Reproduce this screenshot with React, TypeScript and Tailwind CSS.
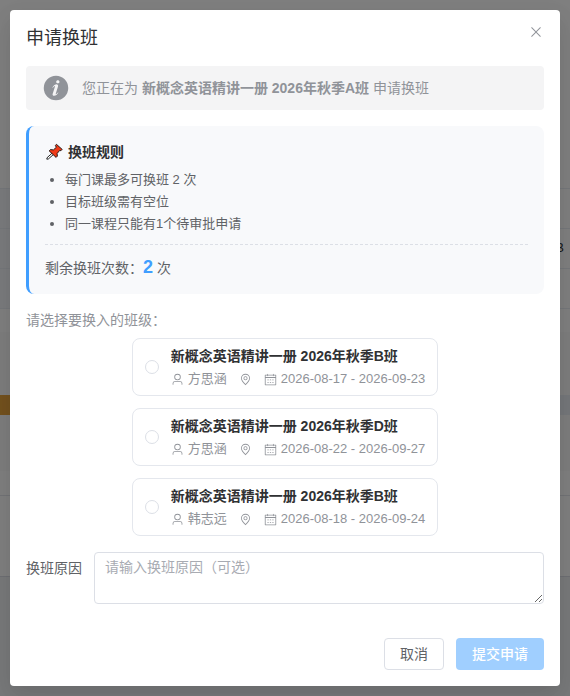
import { useState } from "react";

type IconProps = { paths: string[]; className: string };

function Icon({ paths, className }: IconProps) {
  return (
    <svg viewBox="0 0 1024 1024" fill="currentColor" aria-hidden="true" className={className}>
      {paths.map((d) => (
        <path key={d} d={d} />
      ))}
    </svg>
  );
}

const closeIcon = [
  "M764.288 214.592 512 466.88 259.712 214.592a31.936 31.936 0 0 0-45.12 45.12L466.752 512 214.528 764.224a31.936 31.936 0 1 0 45.12 45.184L512 557.184l252.288 252.288a31.936 31.936 0 0 0 45.12-45.12L557.12 512.064l252.288-252.352a31.936 31.936 0 1 0-45.12-45.184z",
];
const infoIcon = [
  "M512 64a448 448 0 1 1 0 896.064A448 448 0 0 1 512 64m67.2 275.072c33.28 0 60.288-23.104 60.288-57.344s-27.072-57.344-60.288-57.344c-33.28 0-60.16 23.104-60.16 57.344s26.88 57.344 60.16 57.344M590.912 699.2c0-6.848 2.368-24.64 1.024-34.752l-52.608 60.544c-10.88 11.456-24.512 19.392-30.912 17.28a12.992 12.992 0 0 1-8.256-14.72l87.68-276.992c7.168-35.136-12.544-67.2-54.336-71.296-44.096 0-108.992 44.736-148.48 101.504 0 6.784-1.28 23.68.064 33.792l52.544-60.608c10.88-11.328 23.552-19.328 29.952-17.152a12.8 12.8 0 0 1 7.808 16.128L388.48 728.576c-10.048 32.256 8.96 63.872 55.04 71.04 67.84 0 107.904-43.648 147.456-100.416z",
];
const userIcon = [
  "M512 512a192 192 0 1 0 0-384 192 192 0 0 0 0 384m0 64a256 256 0 1 1 0-512 256 256 0 0 1 0 512m320 320v-96a96 96 0 0 0-96-96H288a96 96 0 0 0-96 96v96a32 32 0 1 1-64 0v-96a160 160 0 0 1 160-160h448a160 160 0 0 1 160 160v96a32 32 0 1 1-64 0",
];
const locationIcon = [
  "M800 416a288 288 0 1 0-576 0c0 118.144 94.528 272.128 288 456.576C705.472 688.128 800 534.144 800 416M512 960C277.312 746.688 160 565.312 160 416a352 352 0 0 1 704 0c0 149.312-117.312 330.688-352 544",
  "M512 512a96 96 0 1 0 0-192 96 96 0 0 0 0 192m0 64a160 160 0 1 1 0-320 160 160 0 0 1 0 320",
];
const calendarIcon = [
  "M128 384v512h768V192H768v32a32 32 0 1 1-64 0v-32H320v32a32 32 0 0 1-64 0v-32H128v128h768v64zm192-256h384V96a32 32 0 1 1 64 0v32h160a32 32 0 0 1 32 32v768a32 32 0 0 1-32 32H96a32 32 0 0 1-32-32V160a32 32 0 0 1 32-32h160V96a32 32 0 0 1 64 0zm-32 384h64a32 32 0 0 1 0 64h-64a32 32 0 0 1 0-64m0 192h64a32 32 0 1 1 0 64h-64a32 32 0 1 1 0-64m192-192h64a32 32 0 0 1 0 64h-64a32 32 0 0 1 0-64m0 192h64a32 32 0 1 1 0 64h-64a32 32 0 1 1 0-64m192-192h64a32 32 0 1 1 0 64h-64a32 32 0 1 1 0-64m0 192h64a32 32 0 1 1 0 64h-64a32 32 0 1 1 0-64",
];

function PinIcon() {
  return (
    <svg viewBox="-1 0 18 18" aria-hidden="true" className="size-[18px] shrink-0">
      <path d="M6.2 10 1 14.8.8 16.2l1.5-.2 5.3-4.6z" fill="#fff" stroke="#111" strokeWidth=".9" />
      <path
        d="M10.4 1.3 16.2 6.4l-1.3 1.3-1.3-.2-2.5 3 .3 2.6-1.3 1.3L3.2 7.9l1.3-1.3 2.9.3 2.9-2.6-.9-1.8z"
        fill="#f03a17"
        stroke="#111"
        strokeWidth=".9"
        strokeLinejoin="round"
      />
    </svg>
  );
}

const rules = ["每门课最多可换班 2 次", "目标班级需有空位", "同一课程只能有1个待审批申请"];

const classes = [
  { id: "b1", name: "新概念英语精讲一册 2026年秋季B班", teacher: "方思涵", dates: "2026-08-17 - 2026-09-23" },
  { id: "d1", name: "新概念英语精讲一册 2026年秋季D班", teacher: "方思涵", dates: "2026-08-22 - 2026-09-27" },
  { id: "b2", name: "新概念英语精讲一册 2026年秋季B班", teacher: "韩志远", dates: "2026-08-18 - 2026-09-24" },
];

/* The course page that lies dimmed under the dialog. */
function PageBehind() {
  return (
    <div className="flex min-h-screen flex-col bg-white text-[13px] text-[#303133]" aria-hidden="true">
      <div className="h-[188px]" />
      {["", "B", ""].map((text, i) => (
        <div key={i} className="flex h-10 border-t border-[#ebeef5]">
          <div className="w-1/2 bg-[#f5f7fa]" />
          <div className="flex flex-1 items-center justify-end pr-1.5">{text}</div>
        </div>
      ))}
      <div className="h-6 border-t border-[#ebeef5]" />
      <div className="h-[63px] bg-[#fafafa]" />
      <div className="flex h-5">
        <div className="w-1/2 bg-[#e6a23c]" />
        <div className="flex-1 bg-[#ebeef5]" />
      </div>
      <div className="h-14 bg-[#fafafa]" />
      <div className="h-[25px] border-b border-[#e4e7ed]" />
      <div className="h-20" />
      <div className="flex-1 border-t border-[#dcdfe6] bg-[#f0f2f5]" />
    </div>
  );
}

export default function App() {
  const [selected, setSelected] = useState("");
  const [reason, setReason] = useState("");

  return (
    <div className="relative font-['Liberation_Sans','Noto_Sans_CJK_SC',sans-serif] text-sm">
      <PageBehind />
      <div className="absolute inset-0 bg-black/50 p-[10px]">
        <form
          role="dialog"
          aria-labelledby="dialog-title"
          className="rounded bg-white p-4 text-[#606266] shadow-[0_12px_32px_4px_rgba(0,0,0,0.04),0_8px_20px_rgba(0,0,0,0.08)]"
        >
          <header className="flex items-start justify-between pb-4">
            <h1 id="dialog-title" className="text-lg leading-6 text-[#303133]">申请换班</h1>
            <button type="button" aria-label="关闭" className="-mt-0.5 text-[#909399]">
              <Icon paths={closeIcon} className="size-4" />
            </button>
          </header>

          <div className="flex items-center gap-3 rounded bg-[#f4f4f5] px-4 py-2 text-[#909399]">
            <Icon paths={infoIcon} className="size-7 shrink-0" />
            <p>
              您正在为 <strong>新概念英语精讲一册 2026年秋季A班</strong> 申请换班
            </p>
          </div>

          <section className="mt-4 rounded-lg border-l-[3px] border-[#409eff] bg-[#f8f9fb] p-4">
            <h2 className="flex items-center gap-[5px] font-bold text-[#303133]">
              <PinIcon />
              换班规则
            </h2>
            <ul className="mt-[7px] list-disc pl-5 text-[13px] leading-[22px]">
              {rules.map((rule) => (
                <li key={rule}>{rule}</li>
              ))}
            </ul>
            <p className="mt-[9px] border-t border-dashed border-[#dcdfe6] pt-[13px] leading-5">
              剩余换班次数：<strong className="text-lg leading-none text-[#409eff]">2</strong> 次
            </p>
          </section>

          <fieldset className="mt-4">
            <legend className="leading-5 text-[#909399]">请选择要换入的班级：</legend>
            <div className="mt-2 flex flex-col items-center gap-3">
              {classes.map((c) => (
                <label
                  key={c.id}
                  className="flex cursor-pointer items-center gap-3 rounded-lg border border-[#e4e7ed] px-3 py-1.5"
                >
                  <input
                    type="radio"
                    name="target-class"
                    value={c.id}
                    checked={selected === c.id}
                    onChange={() => setSelected(c.id)}
                    className="size-[14px] appearance-none rounded-full border border-[#dcdfe6] bg-white checked:border-4 checked:border-[#409eff]"
                  />
                  <span className="flex flex-col gap-0.5">
                    <span className="leading-[22px] font-bold text-[#303133]">{c.name}</span>
                    <span className="flex items-center gap-3 text-[13px] leading-5 text-[#909399]">
                      <span className="flex items-center gap-1">
                        <Icon paths={userIcon} className="size-[13px]" />
                        {c.teacher}
                      </span>
                      <Icon paths={locationIcon} className="size-[13px]" />
                      <span className="flex items-center gap-1">
                        <Icon paths={calendarIcon} className="size-[13px]" />
                        {c.dates}
                      </span>
                    </span>
                  </span>
                </label>
              ))}
            </div>
          </fieldset>

          <div className="mt-4 flex gap-3">
            <label htmlFor="reason" className="leading-8">换班原因</label>
            <textarea
              id="reason"
              rows={2}
              value={reason}
              onChange={(e) => setReason(e.target.value)}
              placeholder="请输入换班原因（可选）"
              className="block h-[52px] min-w-0 flex-1 resize-y rounded border border-[#dcdfe6] bg-white px-2.5 py-1 leading-[21px] placeholder:text-[#a8abb2]"
            />
          </div>

          <footer className="mt-[34px] flex justify-end gap-3">
            <button type="button" className="h-8 rounded border border-[#dcdfe6] bg-white px-[15px]">
              取消
            </button>
            <button
              type="submit"
              disabled={!selected}
              className="h-8 rounded bg-[#409eff] px-4 font-medium text-white disabled:bg-[#a0cfff]"
            >
              提交申请
            </button>
          </footer>
        </form>
      </div>
    </div>
  );
}
